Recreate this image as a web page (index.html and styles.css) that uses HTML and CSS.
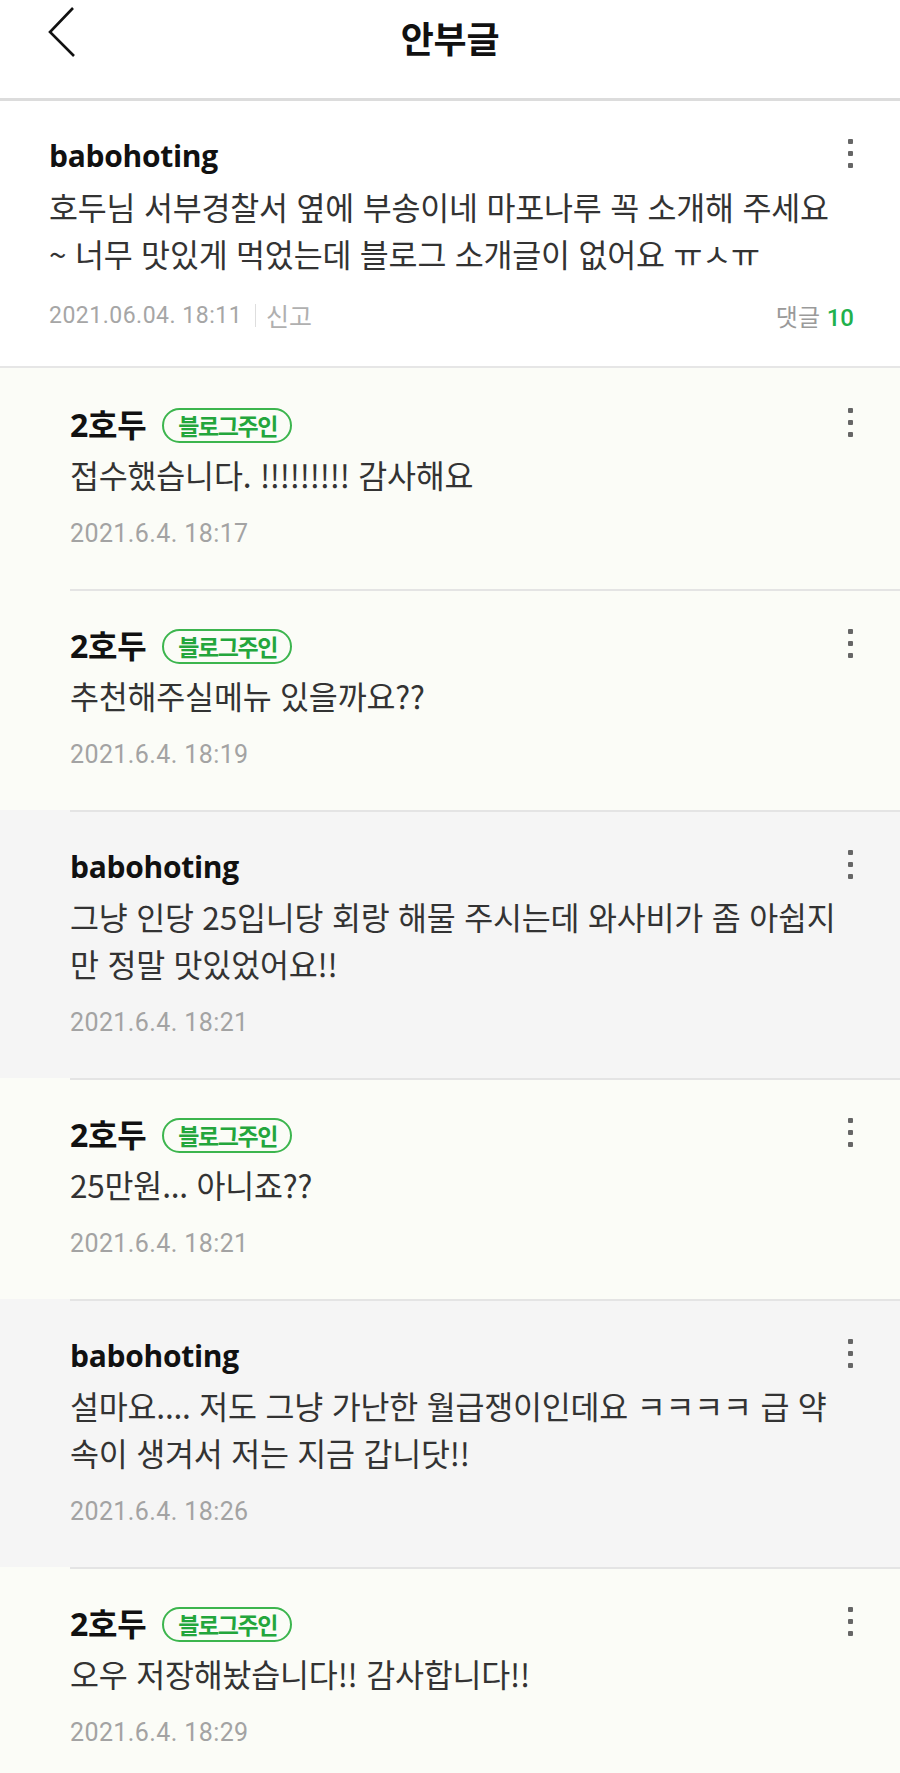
FILE: index.html
```html
<!DOCTYPE html>
<html lang="ko">
<head>
<meta charset="utf-8">
<title>안부글</title>
<link rel="stylesheet" href="styles.css">
</head>
<body>
<header class="topbar">
  <div class="back">
    <svg width="36" height="54" viewBox="0 0 36 54"><polyline points="30,2 7,26 31,50" fill="none" stroke="#111" stroke-width="2.6"/></svg>
  </div>
  <h1 class="title">안부글</h1>
  <div></div>
</header>

<section class="post">
  <div class="head">
    <span class="name">babohoting</span>
    <span class="more"><i></i><i></i><i></i></span>
  </div>
  <p class="text">호두님 서부경찰서 옆에 부송이네 마포나루 꼭 소개해 주세요<br>~ 너무 맛있게 먹었는데 블로그 소개글이 없어요 ㅠㅅㅠ</p>
  <div class="meta">
    <span class="date">2021.06.04. 18:11</span>
    <span class="sep"></span>
    <span class="report">신고</span>
    <span class="count">댓글 <b>10</b></span>
  </div>
</section>

<div class="replies">
  <article class="reply owner">
    <div class="inner">
      <div class="head">
        <span class="name">2호두</span><span class="badge">블로그주인</span>
        <span class="more"><i></i><i></i><i></i></span>
      </div>
      <p class="text">접수했습니다. !!!!!!!!! 감사해요</p>
      <div class="rdate">2021.6.4. 18:17</div>
    </div>
  </article>

  <article class="reply owner">
    <div class="inner">
      <div class="head">
        <span class="name">2호두</span><span class="badge">블로그주인</span>
        <span class="more"><i></i><i></i><i></i></span>
      </div>
      <p class="text">추천해주실메뉴 있을까요??</p>
      <div class="rdate">2021.6.4. 18:19</div>
    </div>
  </article>

  <article class="reply guest">
    <div class="inner">
      <div class="head">
        <span class="name">babohoting</span>
        <span class="more"><i></i><i></i><i></i></span>
      </div>
      <p class="text">그냥 인당 25입니당 회랑 해물 주시는데 와사비가 좀 아쉽지<br>만 정말 맛있었어요!!</p>
      <div class="rdate">2021.6.4. 18:21</div>
    </div>
  </article>

  <article class="reply owner">
    <div class="inner">
      <div class="head">
        <span class="name">2호두</span><span class="badge">블로그주인</span>
        <span class="more"><i></i><i></i><i></i></span>
      </div>
      <p class="text">25만원... 아니죠??</p>
      <div class="rdate">2021.6.4. 18:21</div>
    </div>
  </article>

  <article class="reply guest">
    <div class="inner">
      <div class="head">
        <span class="name">babohoting</span>
        <span class="more"><i></i><i></i><i></i></span>
      </div>
      <p class="text">설마요.... 저도 그냥 가난한 월급쟁이인데요 ㅋㅋㅋㅋ 급 약<br>속이 생겨서 저는 지금 갑니닷!!</p>
      <div class="rdate">2021.6.4. 18:26</div>
    </div>
  </article>

  <article class="reply owner">
    <div class="inner">
      <div class="head">
        <span class="name">2호두</span><span class="badge">블로그주인</span>
        <span class="more"><i></i><i></i><i></i></span>
      </div>
      <p class="text">오우 저장해놨습니다!! 감사합니다!!</p>
      <div class="rdate">2021.6.4. 18:29</div>
    </div>
  </article>
</div>
</body>
</html>
```

FILE: styles.css
```css
* { box-sizing: border-box; }

html, body {
  margin: 0;
  padding: 0;
}

body {
  background: #fbfcf7;
  font-family: "Noto Sans CJK KR", "Noto Sans", sans-serif;
  color: #333;
  min-height: 1773px;
}

.topbar {
  display: grid;
  grid-template-columns: 1fr auto 1fr;
  align-items: start;
  height: 101px;
  background: #fff;
  border-bottom: 3px solid #dcdcdc;
}

.back {
  padding-left: 43px;
  padding-top: 6px;
}

.back svg { display: block; }

.title {
  margin: 13px 0 0;
  font-size: 36px;
  line-height: 48px;
  font-weight: 700;
  color: #111;
  letter-spacing: -0.3px;
}

.post {
  background: #fff;
  padding: 33px 47px 34px 49px;
  border-bottom: 2px solid #e6e6e6;
}

.head {
  display: flex;
  align-items: center;
  height: 44px;
}

.name {
  font-family: "Open Sans", "Noto Sans CJK KR", sans-serif;
  font-weight: 700;
  font-size: 30px;
  line-height: 44px;
  color: #111;
  letter-spacing: -0.3px;
}

.owner .name {
  font-size: 32px;
}

.badge {
  margin-left: 16px;
  height: 35px;
  padding: 0 13px 0 14px;
  border: 2px solid #3cb54e;
  border-radius: 18px;
  color: #23a63c;
  font-size: 23px;
  font-weight: 700;
  line-height: 30px;
  letter-spacing: -1.4px;
}

.more {
  margin-left: auto;
  display: flex;
  flex-direction: column;
  gap: 7px;
  margin-top: -6px;
}

.more i {
  display: block;
  width: 5px;
  height: 5px;
  border-radius: 1px;
  background: #666;
}

.text {
  margin: 5px 0 0;
  font-size: 31.5px;
  line-height: 47px;
  letter-spacing: -0.2px;
  color: #333;
  white-space: nowrap;
}

.meta {
  display: flex;
  align-items: center;
  margin-top: 21px;
  height: 34px;
}

.date {
  font-family: Roboto, sans-serif;
  font-size: 23px;
  letter-spacing: 0.5px;
  color: #a6a6a6;
}

.sep {
  width: 1px;
  height: 23px;
  background: #dedede;
  margin: 0 10px 0 13px;
}

.report {
  font-size: 25px;
  color: #b0b0b0;
}

.count {
  margin-left: auto;
  margin-right: -1px;
  font-size: 24px;
  color: #9a9a9a;
}

.count b {
  font-family: Roboto, sans-serif;
  font-weight: 500;
  font-size: 24px;
  color: #22b14c;
}

.reply {
  padding-left: 70px;
}

.reply.owner { background: #fbfcf7; }
.reply.guest { background: #f5f5f5; }

.reply .inner {
  border-top: 2px solid #e4e4e4;
  padding: 33px 47px 38px 0;
}

.reply:first-child .inner {
  border-top: none;
  padding-top: 35px;
}

.reply .text {
  margin-top: 4px;
}

.rdate {
  margin-top: 19px;
  height: 34px;
  line-height: 34px;
  font-family: Roboto, sans-serif;
  font-size: 25px;
  letter-spacing: 0.4px;
  color: #a3a3a3;
}
```
